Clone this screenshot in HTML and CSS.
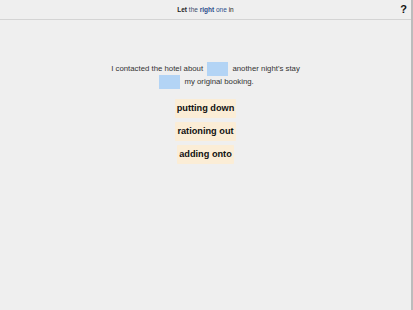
FILE: index.html
```
<!DOCTYPE html>
<html lang="en">
<head>
    <meta charset="UTF-8">
    <title>Let the right one in</title>
    <link rel="stylesheet" href="styles.css">
</head>
<body>
    <div class="header">
        <div class="title"><b>Let</b> <span class="t-mid">the</span> <b class="t-blue">right</b> <span class="t-blue">one</span> in</div>
        <div class="help">?</div>
    </div>

    <div class="main">
        <div class="sentence">
            <div class="line">I contacted the hotel about <span class="blank"></span> another night's stay</div>
            <div class="line"><span class="blank"></span> my original booking.</div>
        </div>

        <div class="options">
            <div class="option">putting down</div>
            <div class="option">rationing out</div>
            <div class="option">adding onto</div>
        </div>
    </div>
</body>
</html>
```
FILE: styles.css
```
body {
    font-family: 'Liberation Sans', Arial, sans-serif;
    margin: 0;
    padding: 0;
    height: 310px;
    background-color: #efefef;
    color: #333;
    border-right: 2px solid #bcbcbc;
    box-sizing: border-box;
}

.header {
    height: 19px;
    border-bottom: 1px solid #d4d4d4;
    display: flex;
    align-items: center;
    justify-content: center;
    position: relative;
}

.title {
    font-size: 6.5px;
    color: #222;
}

.t-mid {
    color: #3b4a6b;
}

.t-blue {
    color: #2b4e8c;
}

.help {
    position: absolute;
    right: 4px;
    top: 3px;
    font-size: 11px;
    font-weight: bold;
    color: #111;
}

.main {
    display: flex;
    flex-direction: column;
    align-items: center;
    padding-top: 42px;
}

.sentence {
    font-size: 7.8px;
    color: #333;
    text-align: center;
}

.line {
    height: 13px;
    line-height: 13px;
    display: flex;
    align-items: center;
    justify-content: center;
    white-space: pre;
}

.blank {
    display: inline-block;
    width: 21px;
    height: 14px;
    background-color: #b3d4f5;
    margin: 0 2px;
}

.options {
    display: flex;
    flex-direction: column;
    align-items: center;
    gap: 4px;
    margin-top: 11px;
}

.option {
    background-color: #fbedd6;
    font-size: 9.2px;
    font-weight: bold;
    color: #111;
    padding: 5px 2px;
    line-height: 9px;
    border-radius: 1px;
}
```
